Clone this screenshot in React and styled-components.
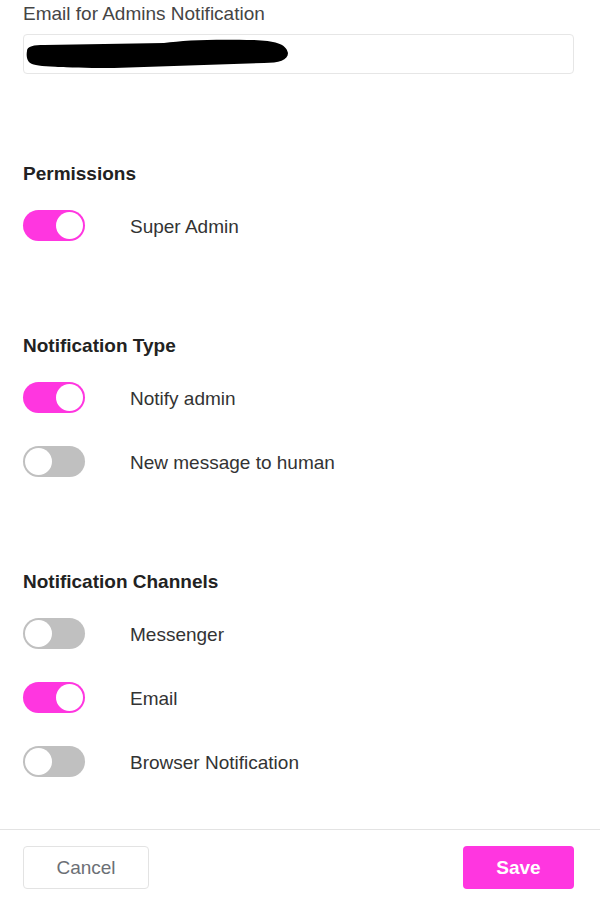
import React, { useState } from "react";
import styled, { createGlobalStyle } from "styled-components";

const PINK = "#ff36e0";

const GlobalStyle = createGlobalStyle`
  body {
    margin: 0;
    background: #ffffff;
    font-family: "Liberation Sans", Arial, sans-serif;
  }
`;

const sections = [
  {
    title: "Permissions",
    items: [{ id: "superAdmin", label: "Super Admin", on: true }],
  },
  {
    title: "Notification Type",
    items: [
      { id: "notifyAdmin", label: "Notify admin", on: true },
      { id: "newMessage", label: "New message to human", on: false },
    ],
  },
  {
    title: "Notification Channels",
    items: [
      { id: "messenger", label: "Messenger", on: false },
      { id: "email", label: "Email", on: true },
      { id: "browser", label: "Browser Notification", on: false },
    ],
  },
];

function App() {
  const [values, setValues] = useState(() => {
    const init = {};
    sections.forEach((s) => s.items.forEach((i) => (init[i.id] = i.on)));
    return init;
  });

  const flip = (id) => setValues((v) => ({ ...v, [id]: !v[id] }));

  return (
    <Page>
      <GlobalStyle />
      <Content>
        <Field>
          <Label>Email for Admins Notification</Label>
          <InputBox>
            {/* redaction scribble over the address */}
            <svg width="268" height="40" viewBox="0 0 268 40">
              <path
                d="M3,17 C3,12 10,11 20,11 L140,9 C160,6 190,5 230,6 C250,7 262,9 264,19 C264,26 255,29 240,29 L90,34 C50,34 15,33 8,30 C3,28 2,22 3,17 Z"
                fill="#000"
              />
            </svg>
          </InputBox>
        </Field>

        {sections.map((section) => (
          <Section key={section.title}>
            <Heading>{section.title}</Heading>
            <Rows>
              {section.items.map((item) => (
                <Row key={item.id}>
                  <Track $on={values[item.id]} onClick={() => flip(item.id)}>
                    <Knob />
                  </Track>
                  <RowLabel>{item.label}</RowLabel>
                </Row>
              ))}
            </Rows>
          </Section>
        ))}
      </Content>

      <Footer>
        <CancelButton>Cancel</CancelButton>
        <SaveButton>Save</SaveButton>
      </Footer>
    </Page>
  );
}

export default App;

// styled-components

const Page = styled.div`
  min-height: 900px;
  display: flex;
  flex-direction: column;
  box-sizing: border-box;
`;

const Content = styled.div`
  padding: 3px 26px 0 23px;
  display: flex;
  flex-direction: column;
`;

const Field = styled.div`
  display: flex;
  flex-direction: column;
`;

const Label = styled.div`
  font-size: 19px;
  line-height: 22px;
  color: #454545;
  margin-bottom: 9px;
`;

const InputBox = styled.div`
  height: 40px;
  box-sizing: border-box;
  border: 1px solid #e6e6e6;
  border-radius: 4px;
  display: flex;
  align-items: center;
  overflow: hidden;
`;

const Section = styled.div`
  margin-top: 89px;
  display: flex;
  flex-direction: column;
  & + & {
    margin-top: 94px;
  }
`;

const Heading = styled.div`
  font-size: 19px;
  line-height: 22px;
  font-weight: 700;
  color: #222222;
  margin-bottom: 24px;
`;

const Rows = styled.div`
  display: flex;
  flex-direction: column;
  gap: 32px;
`;

const Row = styled.div`
  height: 32px;
  display: flex;
  align-items: center;
`;

const Track = styled.div`
  width: 62px;
  height: 31px;
  box-sizing: border-box;
  padding: 2px;
  border-radius: 16px;
  background: ${(p) => (p.$on ? PINK : "#c0c0c0")};
  display: flex;
  justify-content: ${(p) => (p.$on ? "flex-end" : "flex-start")};
  cursor: pointer;
  flex-shrink: 0;
`;

const Knob = styled.div`
  width: 27px;
  height: 27px;
  border-radius: 50%;
  background: #ffffff;
`;

const RowLabel = styled.span`
  margin-left: 45px;
  padding-top: 4px;
  font-size: 19px;
  color: #333333;
`;

const Footer = styled.div`
  margin-top: auto;
  border-top: 1px solid #e3e3e3;
  padding: 16px 26px 11px 23px;
  display: flex;
  justify-content: space-between;
  align-items: center;
`;

const CancelButton = styled.button`
  width: 126px;
  height: 43px;
  background: #ffffff;
  border: 1px solid #e3e3e3;
  border-radius: 4px;
  font-family: "Liberation Sans", Arial, sans-serif;
  font-size: 19px;
  color: #6c6f75;
  cursor: pointer;
`;

const SaveButton = styled.button`
  width: 111px;
  height: 43px;
  background: ${PINK};
  border: none;
  border-radius: 4px;
  font-family: "Liberation Sans", Arial, sans-serif;
  font-size: 19px;
  font-weight: 700;
  color: #ffffff;
  cursor: pointer;
`;
